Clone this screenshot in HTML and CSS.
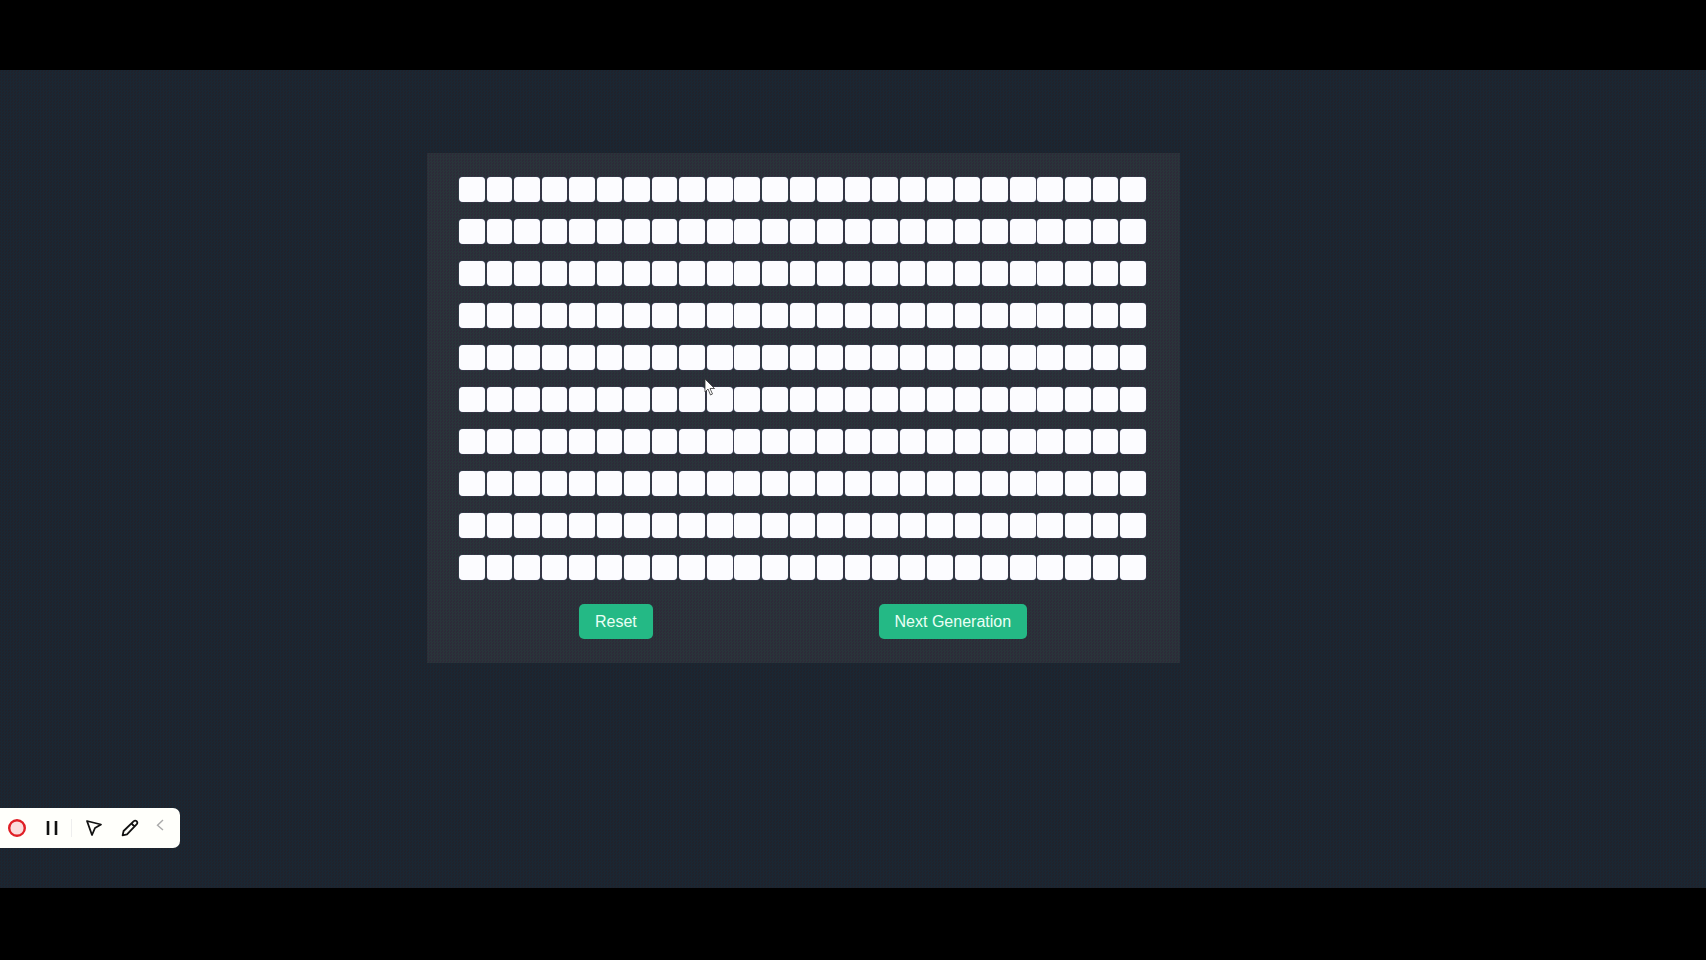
FILE: index.html
```html
<!DOCTYPE html>
<html lang="en">
<head>
  <meta charset="UTF-8">
  <title>Game of Life</title>
  <link rel="stylesheet" href="styles.css">
</head>
<body>
  <div class="screen">
    <div class="panel">
      <div id="grid" class="grid"></div>
      <div class="actions">
        <button class="btn">Reset</button>
        <button class="btn">Next Generation</button>
      </div>
    </div>
  </div>

  <div class="toolbar">
    <svg class="tool-icon" width="20" height="20" viewBox="0 0 20 20"><circle cx="10" cy="10" r="7.8" fill="#fbdcdc" stroke="#e01f26" stroke-width="2.4"/></svg>
    <svg class="tool-icon" width="14" height="16" viewBox="0 0 14 16"><path d="M3 1v14M11 1v14" stroke="#111" stroke-width="2.6" fill="none"/></svg>
    <span class="divider"></span>
    <svg class="tool-icon" width="18" height="18" viewBox="0 0 18 18"><path d="M2 2l14 3.500-6 3.500-3 7z" fill="none" stroke="#111" stroke-width="1.800" stroke-linejoin="round"/></svg>
    <svg class="tool-icon" width="18" height="18" viewBox="0 0 18 18"><path d="M12.800 2.200a1.900 1.900 0 0 1 2.700 0l.3.3a1.900 1.900 0 0 1 0 2.700L6 15.400l-4.400 1 1-4.400zM10.500 4.500l3 3" fill="none" stroke="#111" stroke-width="1.800" stroke-linejoin="round"/></svg>
    <svg class="tool-chevron" width="8" height="12" viewBox="0 0 8 12"><path d="M7 1L1.500 6.200 7 11" fill="none" stroke="#aaa" stroke-width="1.400"/></svg>
  </div>

  <svg class="cursor" width="12" height="19" viewBox="0 0 12 19"><path d="M1 1v13l3-3 2.500 6 2-1-2.500-5.500h4.500z" fill="#fff" stroke="#333" stroke-width="0.8"/></svg>

  <script>
    const grid = document.getElementById('grid');
    for (let i = 0; i < 250; i++) {
      const cell = document.createElement('div');
      cell.className = 'cell';
      grid.appendChild(cell);
    }
  </script>
</body>
</html>
```

FILE: styles.css
```css
body, html {
  height: 100%;
  margin: 0;
  overflow: hidden;
  background: #000;
  font-family: "Liberation Sans", Arial, sans-serif;
}

body {
  padding-top: 70px;
  box-sizing: border-box;
}

.screen {
  height: 818px;
  box-sizing: border-box;
  padding: 83px 0 0 427px;
  background-color: #1c2430;
  background-image: repeating-conic-gradient(#1a2733 0 25%, #20222b 0 50%);
  background-size: 3px 3px;
}

.panel {
  width: 753px;
  height: 510px;
  box-sizing: border-box;
  padding: 23.500px 32px 0;
  background-color: #2a2e38;
  background-image: repeating-conic-gradient(#29353a 0 25%, #2d2a38 0 50%);
  background-size: 3px 3px;
}

.grid {
  display: grid;
  grid-template-columns: repeat(25, 25.6px);
  column-gap: 1.96px;
  row-gap: 16.45px;
}

.cell {
  height: 25.6px;
  background: #fcfcff;
  border-radius: 4px;
  box-shadow: 0 0 1px #8f93c4;
}

.actions {
  display: flex;
  justify-content: space-around;
  margin: 24px 8px 0 7px;
}

.btn {
  height: 35px;
  padding: 0 16px;
  border: none;
  border-radius: 5px;
  background: #24b985;
  color: #eafff5;
  font-family: inherit;
  font-size: 16px;
}

.toolbar {
  position: absolute;
  left: 0;
  top: 808px;
  width: 180px;
  height: 40px;
  display: flex;
  align-items: center;
  background: #fffffb;
  border-radius: 0 7px 7px 0;
}

.tool-icon {
  flex: none;
  margin-left: 18px;
}

.tool-icon:first-child {
  margin-left: 7px;
}

.divider {
  width: 1px;
  height: 18px;
  margin-left: 12px;
  background: #eee;
}

.divider + .tool-icon {
  margin-left: 13px;
}

.tool-chevron {
  margin: -6px 0 0 17px;
}

.cursor {
  position: absolute;
  left: 704px;
  top: 378px;
}
```
